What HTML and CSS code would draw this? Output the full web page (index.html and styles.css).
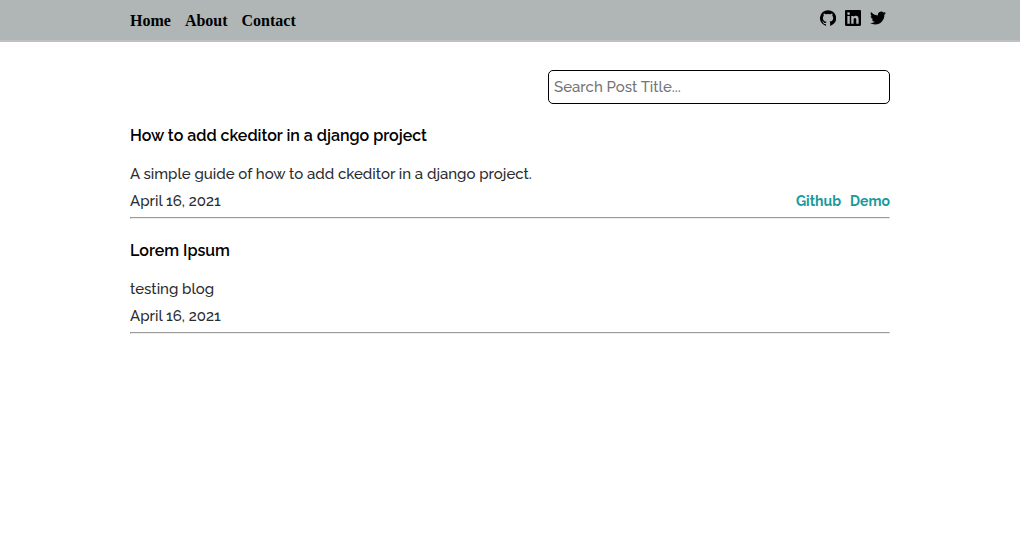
FILE: index.html
```html
<!DOCTYPE html>
<html lang="en">
<head>
<meta charset="utf-8">
<meta name="viewport" content="width=device-width, initial-scale=1">
<title>Blog</title>
<link rel="stylesheet" href="styles.css">
</head>
<body>
<header class="site-header">
  <div class="container header-row">
    <nav class="nav" aria-label="Main">
      <a href="#home">Home</a>
      <a href="#about">About</a>
      <a href="#contact">Contact</a>
    </nav>
    <div class="social">
      <a href="#github" aria-label="GitHub"><svg viewBox="0 0 24 24"><path d="M12 .3a12 12 0 0 0-3.8 23.4c.6.1.8-.3.8-.6v-2c-3.3.7-4-1.6-4-1.6-.6-1.4-1.4-1.8-1.4-1.8-1-.7.1-.7.1-.7 1.2.1 1.9 1.2 1.9 1.2 1 1.8 2.800 1.300 3.500 1 .1-.8.4-1.300.8-1.600-2.700-.3-5.500-1.300-5.500-6 0-1.200.5-2.300 1.300-3.100-.2-.4-.6-1.600 0-3.200 0 0 1-.3 3.400 1.200a11.500 11.500 0 0 1 6 0c2.300-1.500 3.300-1.200 3.300-1.200.6 1.600.2 2.800.1 3.200.8.8 1.300 1.900 1.300 3.200 0 4.600-2.800 5.600-5.500 5.900.5.4.9 1 .9 2.200v3.300c0 .3.1.7.8.6A12 12 0 0 0 12 .3"/></svg></a>
      <a href="#linkedin" aria-label="LinkedIn"><svg viewBox="0 0 24 24"><path d="M20.450 20.450h-3.560v-5.570c0-1.330-.02-3.040-1.850-3.040-1.850 0-2.140 1.450-2.140 2.940v5.670H9.350V9h3.410v1.560h.05c.48-.9 1.640-1.850 3.370-1.850 3.600 0 4.270 2.370 4.270 5.460v6.280zM5.340 7.430a2.060 2.060 0 1 1 0-4.130 2.060 2.060 0 0 1 0 4.130zm1.780 13.020H3.560V9h3.560v11.450zM22.220 0H1.770C.79 0 0 .77 0 1.730v20.540C0 23.230.79 24 1.770 24h20.450c.98 0 1.780-.77 1.780-1.730V1.730C24 .77 23.200 0 22.220 0z"/></svg></a>
      <a href="#twitter" aria-label="Twitter"><svg viewBox="0 0 24 24"><path d="M23.950 4.570a10 10 0 0 1-2.820.77 4.960 4.960 0 0 0 2.160-2.720c-.95.55-2 .95-3.130 1.180a4.920 4.920 0 0 0-8.380 4.480C7.690 8.090 4.070 6.130 1.640 3.160a4.820 4.820 0 0 0-.67 2.480c0 1.710.87 3.210 2.190 4.100a4.900 4.900 0 0 1-2.230-.62v.06a4.920 4.920 0 0 0 3.950 4.830 5 5 0 0 1-2.210.08 4.940 4.940 0 0 0 4.600 3.420A9.870 9.870 0 0 1 0 19.540a14 14 0 0 0 7.550 2.210c9.050 0 14-7.500 14-13.980 0-.21 0-.42-.02-.63a9.940 9.940 0 0 0 2.460-2.550z"/></svg></a>
    </div>
  </div>
</header>
<main class="container">
  <form class="search" role="search">
    <input class="search-box" type="text" placeholder="Search Post Title..." aria-label="Search Post Title">
  </form>
  <article class="post">
    <h2 class="post-title">How to add ckeditor in a django project</h2>
    <p class="post-text">A simple guide of how to add ckeditor in a django project.</p>
    <div class="post-meta">
      <time datetime="2021-04-16">April 16, 2021</time>
      <div class="post-links">
        <a href="#source">Github</a>
        <a href="#demo">Demo</a>
      </div>
    </div>
    <hr class="rule">
  </article>
  <article class="post">
    <h2 class="post-title">Lorem Ipsum</h2>
    <p class="post-text">testing blog</p>
    <div class="post-meta">
      <time datetime="2021-04-16">April 16, 2021</time>
    </div>
    <hr class="rule">
  </article>
</main>
</body>
</html>
```
FILE: styles.css
```css
* {
  box-sizing: border-box;
}

body {
  margin: 0;
  background: #fff;
  color: #2a2c2e;
  font: 500 15px/27px Raleway, Lato, sans-serif;
}

a {
  text-decoration: none;
}

.container {
  width: calc(100% - 32px);
  max-width: 760px;
  margin: 0 auto;
}

.site-header {
  background: #b0b6b5;
  border-bottom: 2px solid #c0c0c0;
}

.header-row {
  display: flex;
  justify-content: space-between;
  align-items: flex-start;
  padding: 10px 0 9px;
}

.nav {
  display: flex;
  gap: 14px;
  font: bold 16px/21px "Liberation Serif", serif;
}

.nav a,
.social a {
  color: #000;
}

.social {
  display: flex;
  gap: 9px;
  padding-right: 4px;
}

.social svg {
  display: block;
  width: 16px;
  height: 16px;
}

.search {
  display: flex;
  justify-content: flex-end;
  padding: 28px 0 18px;
}

.search-box {
  width: 45%;
  height: 34px;
  padding: 0 5px;
  border: 1px solid #000;
  border-radius: 5px;
  background: #fff;
  font: inherit;
}

.search-box::placeholder {
  color: #757575;
}

.post {
  padding-bottom: 18px;
}

.post-title {
  margin: 0 0 12px;
  color: #000;
  font-size: 16px;
  font-weight: 600;
  line-height: 27px;
}

.post-text {
  margin: 0;
}

.post-meta,
.post-links {
  display: flex;
  justify-content: space-between;
  gap: 9px;
}

.post-links a {
  color: #1a9a9e;
  font-size: 14px;
  font-weight: bold;
}

.rule {
  margin: 2px 0 0;
  border: 1px solid #eee;
  border-top-color: #9a9a9a;
  border-left-color: #9a9a9a;
}
```
